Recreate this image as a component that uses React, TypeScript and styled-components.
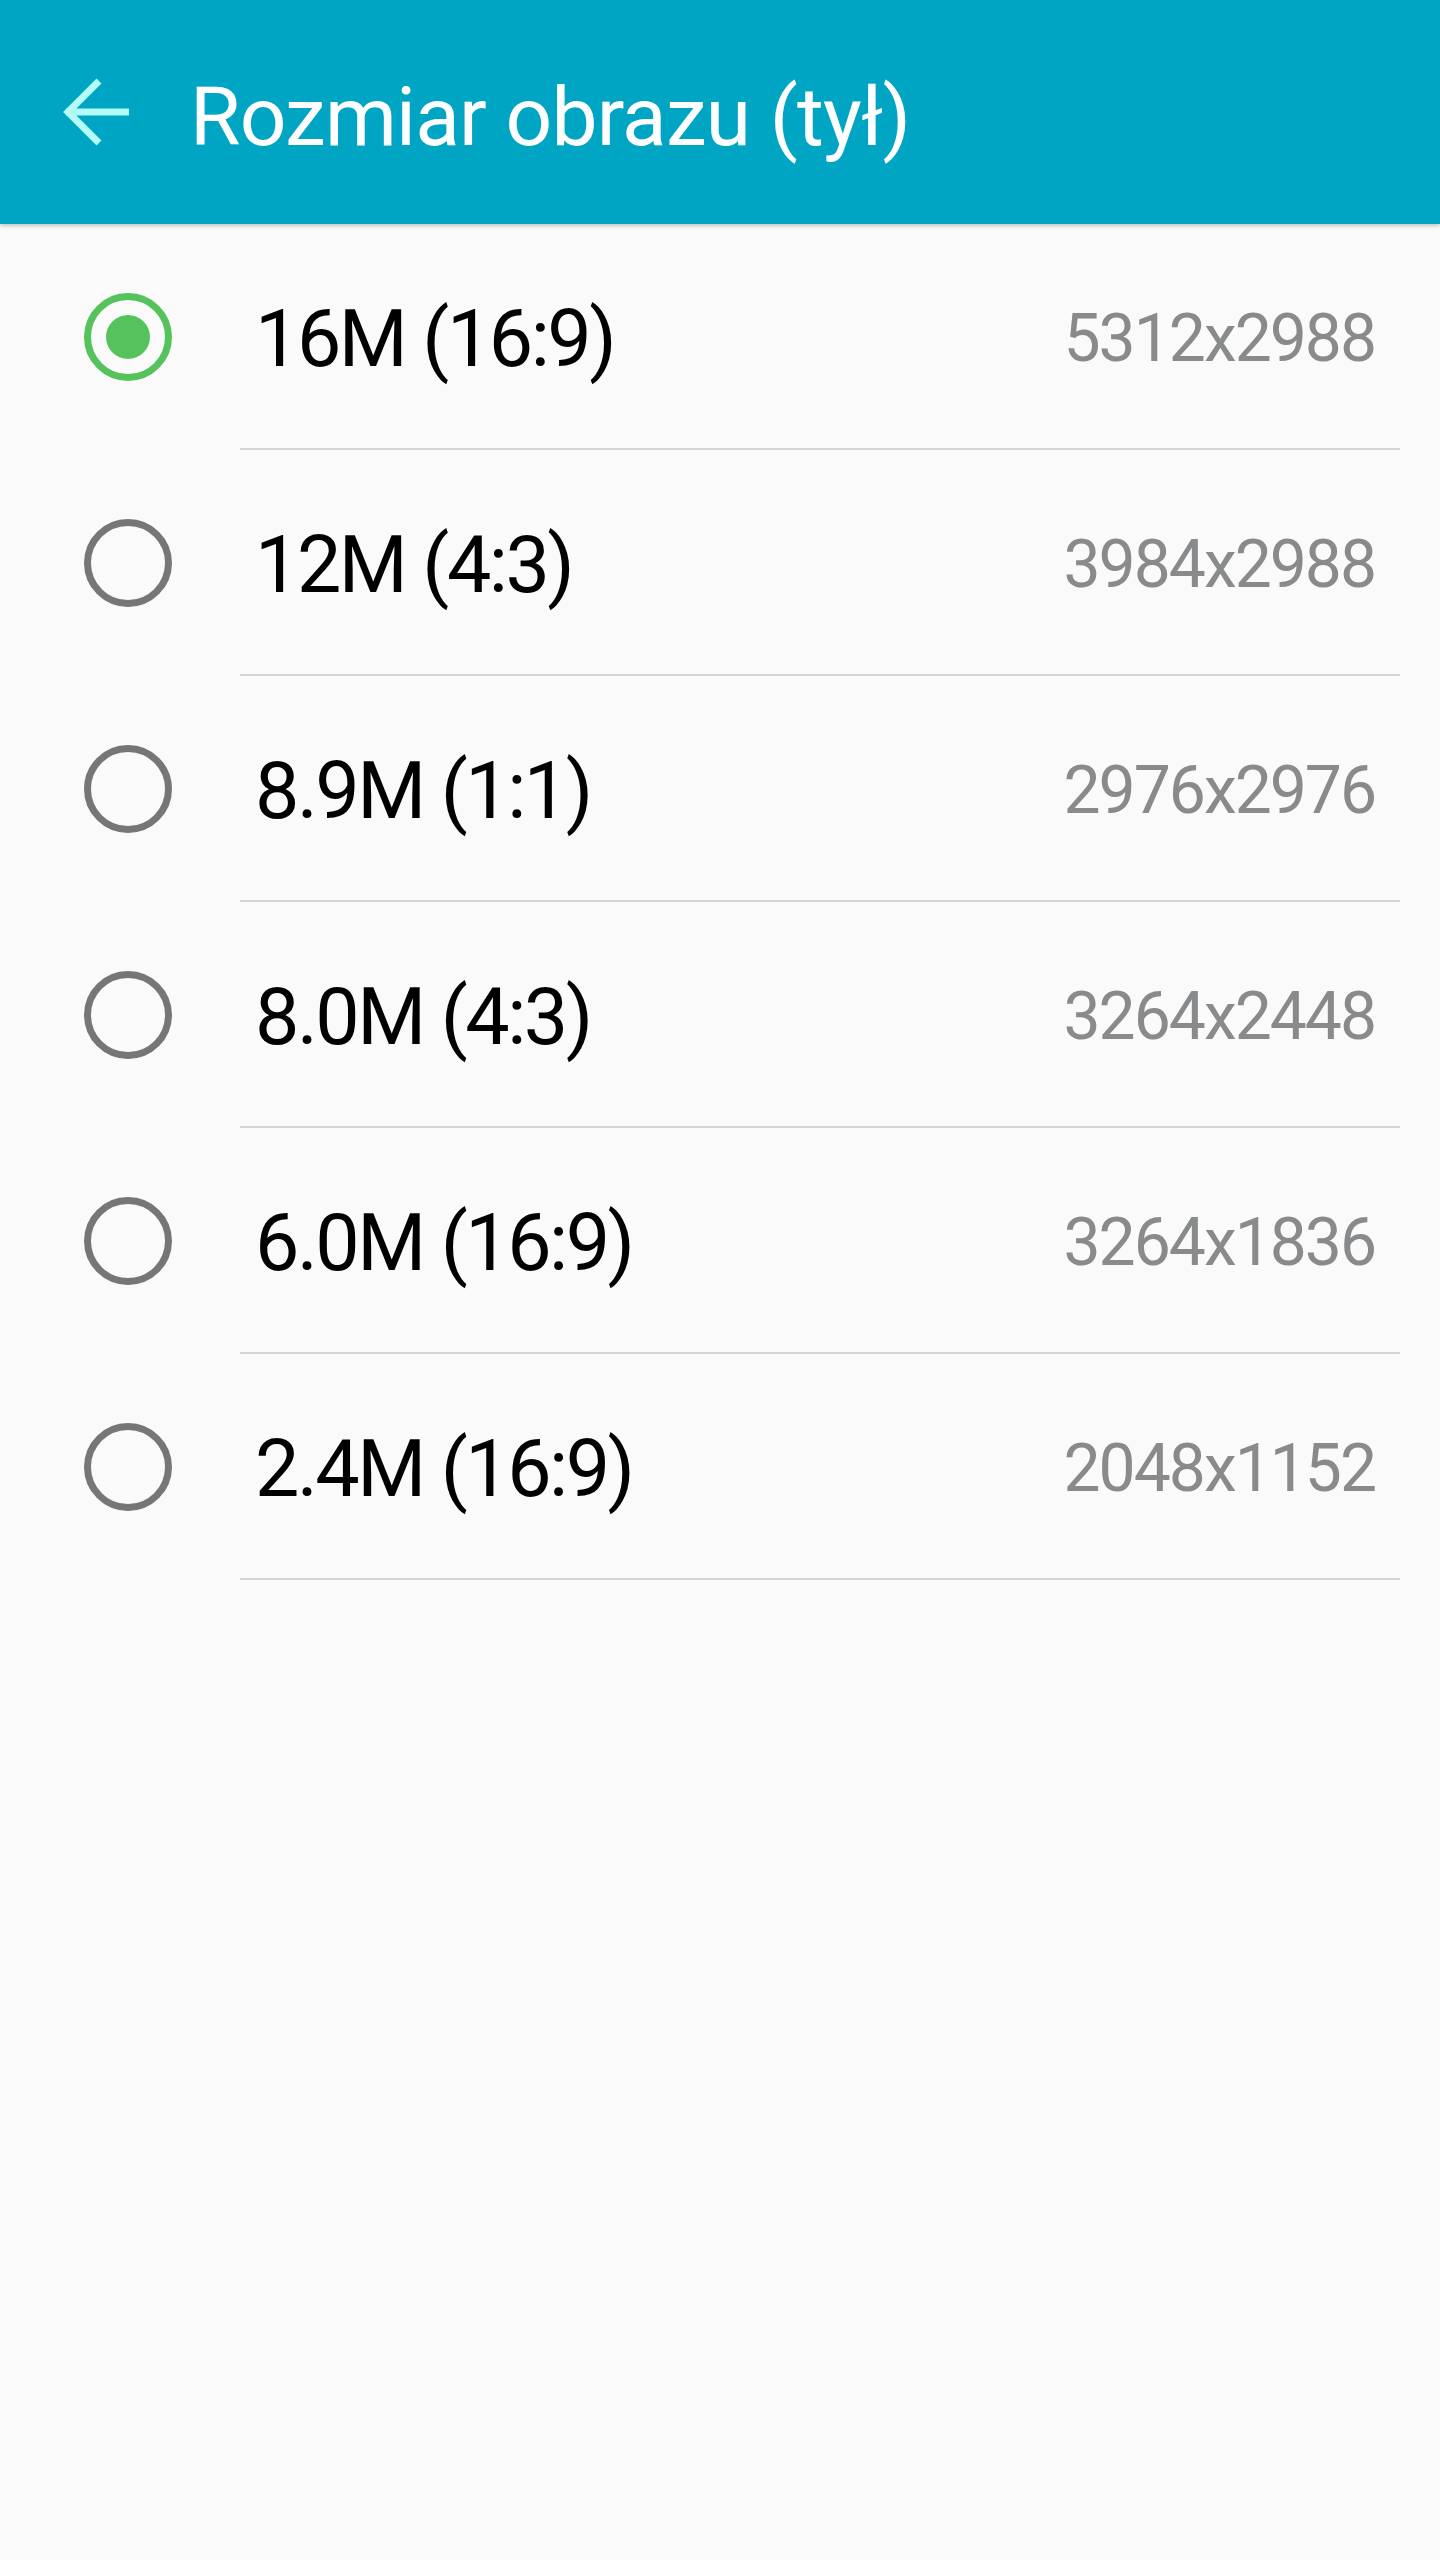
import React from "react";
import styled, { createGlobalStyle } from "styled-components";

const GlobalStyle = createGlobalStyle`
  html, body {
    margin: 0;
    padding: 0;
    background: #fafafa;
  }
  body {
    font-family: Roboto, "Noto Sans", "Liberation Sans", sans-serif;
    -webkit-font-smoothing: antialiased;
  }
`;

const Page = styled.div`
  width: 1440px;
  min-height: 2560px;
  background: #fafafa;
  display: flex;
  flex-direction: column;
`;

const Toolbar = styled.header`
  height: 224px;
  background: #00a5c4;
  display: flex;
  align-items: center;
  padding-left: 62px;
  box-shadow: 0 2px 4px rgba(0, 0, 0, 0.22);
  position: relative;
  z-index: 1;
`;

const BackButton = styled.button`
  border: 0;
  background: transparent;
  padding: 0;
  width: 70px;
  height: 70px;
  display: flex;
  align-items: center;
  justify-content: center;
  margin-right: 58px;
  cursor: pointer;
`;

const Title = styled.h1`
  margin: 0;
  font-family: Roboto, "Noto Sans", sans-serif;
  font-weight: 400;
  font-size: 82px;
  letter-spacing: -0.8px;
  color: #ffffff;
  line-height: 1;
  padding-top: 10px;
`;

const List = styled.ul`
  list-style: none;
  margin: 0;
  padding: 0;
`;

const Row = styled.li`
  display: flex;
  height: 226px;
`;

const RadioCell = styled.div`
  width: 240px;
  flex: none;
  display: flex;
  align-items: center;
  padding-left: 84px;
  box-sizing: border-box;
`;

const Radio = styled.span<{ $checked: boolean }>`
  width: 88px;
  height: 88px;
  box-sizing: border-box;
  border-radius: 50%;
  border: 7px solid ${(p) => (p.$checked ? "#55c25b" : "#767676")};
  display: flex;
  align-items: center;
  justify-content: center;
  margin-top: -1px;

  &::after {
    content: "";
    width: 44px;
    height: 44px;
    border-radius: 50%;
    background: #55c25b;
    display: ${(p) => (p.$checked ? "block" : "none")};
  }
`;

const Content = styled.div`
  flex: 1;
  margin-right: 40px;
  display: flex;
  align-items: center;
  justify-content: space-between;
  border-bottom: 2px solid #d3d3d3;
  padding: 0 25px 0 15px;
`;

const Label = styled.span`
  font-size: 79px;
  letter-spacing: -2.5px;
  color: #000000;
  line-height: 1;
  padding-top: 6px;
`;

const Value = styled.span`
  font-size: 66px;
  letter-spacing: -2px;
  color: #888a8c;
  line-height: 1;
  padding-top: 6px;
`;

const BackArrow = () => (
  <svg width="70" height="70" viewBox="0 0 70 70">
    <g
      fill="none"
      stroke="#b2fbf6"
      strokeWidth="7"
      strokeLinecap="butt"
      strokeLinejoin="miter"
    >
      <path d="M4 35 H67" />
      <path d="M37 4 L6 35 L37 66" />
    </g>
  </svg>
);

const options = [
  { label: "16M (16:9)", value: "5312x2988" },
  { label: "12M (4:3)", value: "3984x2988" },
  { label: "8.9M (1:1)", value: "2976x2976" },
  { label: "8.0M (4:3)", value: "3264x2448" },
  { label: "6.0M (16:9)", value: "3264x1836" },
  { label: "2.4M (16:9)", value: "2048x1152" },
];

export default function App() {
  const selected = 0;
  return (
    <Page>
      <GlobalStyle />
      <Toolbar>
        <BackButton aria-label="Wstecz">
          <BackArrow />
        </BackButton>
        <Title>Rozmiar obrazu (tył)</Title>
      </Toolbar>
      <List>
        {options.map((o, i) => (
          <Row key={o.label}>
            <RadioCell>
              <Radio $checked={i === selected} />
            </RadioCell>
            <Content>
              <Label>{o.label}</Label>
              <Value>{o.value}</Value>
            </Content>
          </Row>
        ))}
      </List>
    </Page>
  );
}
